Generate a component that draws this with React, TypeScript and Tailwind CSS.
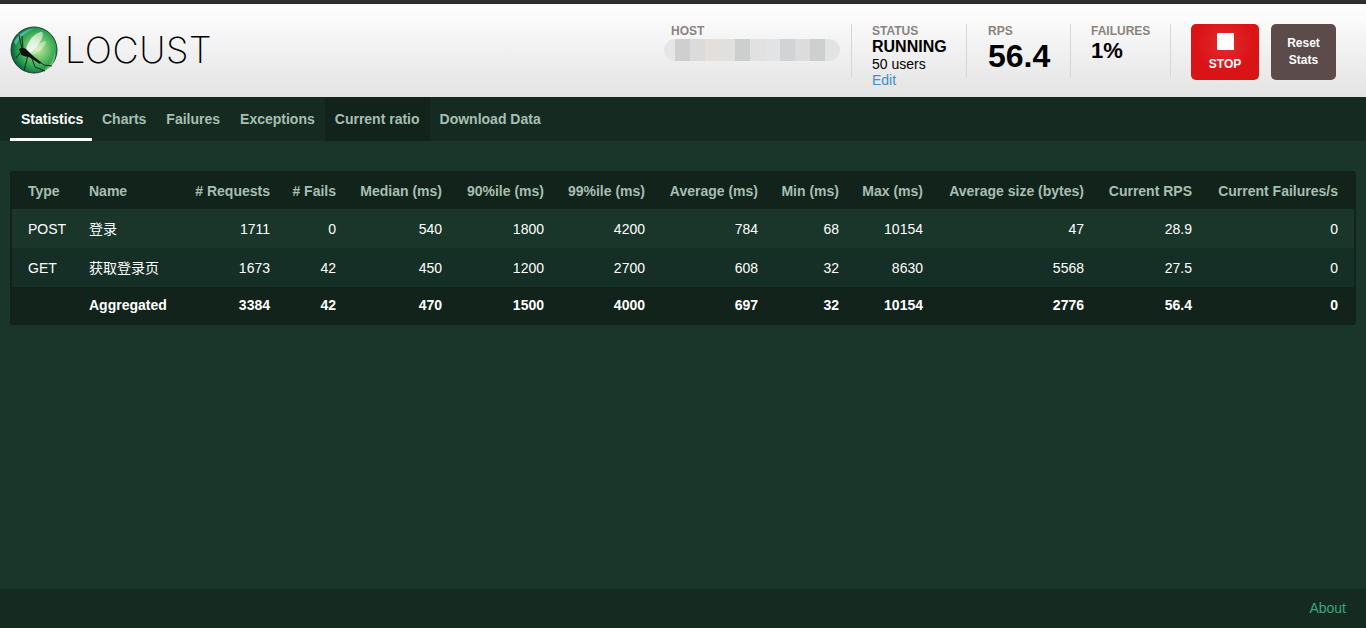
import React from "react";

const headers = ["Type", "Name", "# Requests", "# Fails", "Median (ms)", "90%ile (ms)", "99%ile (ms)", "Average (ms)", "Min (ms)", "Max (ms)", "Average size (bytes)", "Current RPS", "Current Failures/s"];
const widths = [61, 114, 103, 66, 106, 102, 101, 113, 81, 84, 161, 108, 146];
const rows = [
  ["POST", "登录", "1711", "0", "540", "1800", "4200", "784", "68", "10154", "47", "28.9", "0"],
  ["GET", "获取登录页", "1673", "42", "450", "1200", "2700", "608", "32", "8630", "5568", "27.5", "0"],
];
const agg = ["", "Aggregated", "3384", "42", "470", "1500", "4000", "697", "32", "10154", "2776", "56.4", "0"];
const tabs = ["Statistics", "Charts", "Failures", "Exceptions", "Current ratio", "Download Data"];
const blur: [number, string][] = [
  [11, "bg-[#e6e6e6]"], [15, "bg-[#cfcfcf]"], [15, "bg-[#dbdbdb]"], [15, "bg-[#e2dfdd]"], [15, "bg-[#e0e0de]"], [15, "bg-[#cdcfcf]"],
  [15, "bg-[#e3e1e0]"], [15, "bg-[#e2e3e4]"], [15, "bg-[#d2d3d4]"], [15, "bg-[#dcdcdc]"], [15, "bg-[#cfcfcf]"], [15, "bg-[#e2e3e4]"],
];

function Logo() {
  return (
    <svg width="48" height="48" viewBox="0 0 48 48" className="shrink-0">
      <defs>
        <radialGradient id="ball" cx="58%" cy="48%" r="58%">
          <stop offset="0%" stopColor="#c4e8a8" />
          <stop offset="40%" stopColor="#6cc46a" />
          <stop offset="78%" stopColor="#1f9a4c" />
          <stop offset="100%" stopColor="#0c5a38" />
        </radialGradient>
        <linearGradient id="wing" x1="1" y1="0" x2="0" y2="1">
          <stop offset="0%" stopColor="#ffffff" stopOpacity="0.5" />
          <stop offset="100%" stopColor="#ffffff" stopOpacity="0.95" />
        </linearGradient>
      </defs>
      <circle cx="24" cy="24" r="23" fill="url(#ball)" stroke="#1d3a36" strokeWidth="1" />
      <path d="M4 16C8 8 16 3 25 2.5C18 5 10 10 6 19Z" fill="#5ec8bd" opacity="0.75" />
      <path d="M34 44C40 40 44 33 45 26C46 34 42 41 35 45Z" fill="#7fdc6f" opacity="0.8" />
      <path d="M16 24C17 16 24 7 32 5.5C35 9 30 19 20 27Z" fill="url(#wing)" />
      <path d="M20 27C24 21 30 16 36 15C36 20 29 27 22 29Z" fill="#ffffff" opacity="0.4" />
      <path d="M9 23C11 21.5 14 22 16 23L21 28L31 37L30 38L19 31C16 31 13 30 11 28.5Z" fill="#0d1512" />
      <path d="M12 23L9 9M13 23L12 10M18 29L14 45M21 30L25 41L35 45M25 32L34 39L42 40M10 27L6 32" stroke="#0d1512" strokeWidth="0.9" fill="none" />
    </svg>
  );
}

function Divider() {
  return <div className="w-px h-[53px] bg-[#d6d6d6] shrink-0" />;
}

const label = "text-[12px] font-bold leading-[14px] text-[#8a8380]";

export default function App() {
  const cellPad = (i: number) => {
    if (i === 0) return "pl-[16px] pr-[4px] border-l-2 border-[#12231b] text-left";
    if (i === 1) return "pl-[18px] pr-0 text-left";
    if (i === 12) return "pl-0 pr-[16px] border-r-2 border-[#12231b] text-right";
    return "pl-0 pr-[18px] text-right";
  };
  return (
    <div className="h-[628px] flex flex-col bg-[#1a362b] font-['Liberation_Sans','Noto_Sans_CJK_SC',sans-serif] text-[14px] overflow-hidden">
      <header className="h-[97px] shrink-0 border-t-[4px] border-[#2f2f2f] bg-gradient-to-b from-white to-[#e3e3e3] flex items-start justify-between pl-[10px] pr-[30px]">
        <div className="flex items-center mt-[22px] gap-[7px]">
          <Logo />
          <span className="font-['Inter',sans-serif] font-extralight text-[36px] leading-[48px] tracking-[0.6px] text-black">LOCUST</span>
        </div>
        <div className="flex items-start pt-[20px]">
          <div className="w-[180px]">
            <div className={label}>HOST</div>
            <div className="flex h-[22px] mt-[1px] -ml-[7px] w-[176px] rounded-full overflow-hidden">
              {blur.map(([w, c], i) => (
                <div key={i} className={c} style={{ width: w }} />
              ))}
            </div>
          </div>
          <Divider />
          <div className="w-[114px] pl-[20px]">
            <div className={label}>STATUS</div>
            <div className="text-[16px] font-bold leading-[16px] text-black mt-[1px]">RUNNING</div>
            <div className="text-[14px] leading-[16px] mt-[1px] text-black">50 users</div>
            <div className="text-[14px] leading-[16px] text-[#3f8fc9]">Edit</div>
          </div>
          <Divider />
          <div className="w-[103px] pl-[21px]">
            <div className={label}>RPS</div>
            <div className="text-[32px] font-bold leading-[32px] text-black mt-[2px]">56.4</div>
          </div>
          <Divider />
          <div className="w-[99px] pl-[20px]">
            <div className={label}>FAILURES</div>
            <div className="text-[22px] font-bold leading-[24px] text-black mt-[1px]">1%</div>
          </div>
          <Divider />
          <button className="ml-[20px] w-[68px] h-[56px] rounded-[5px] bg-[radial-gradient(circle_at_50%_35%,#e22a2d,#d91316_60%)] flex flex-col items-center pt-[9px] text-white text-[12px] font-bold leading-[14px]">
            <span className="block w-[17px] h-[17px] bg-white" />
            <span className="mt-[7px]">STOP</span>
          </button>
          <button className="ml-[12px] w-[65px] h-[56px] rounded-[5px] bg-[#5b4b4a] text-white text-[12px] font-bold leading-[17px]">
            Reset<br />Stats
          </button>
        </div>
      </header>

      <nav className="h-[44px] shrink-0 bg-[#152b22] flex pl-[10px] font-bold text-[#a6bfb2]">
        {tabs.map((t, i) => (
          <div
            key={t}
            className={`h-[44px] leading-[44px] ${i === 0 ? "w-[82px] pl-[11px] text-white border-b-[3px] border-white" : "px-[10px]"} ${i === 4 ? "bg-[#12231b]" : ""}`}
          >
            {t}
          </div>
        ))}
      </nav>

      <main className="flex-1 px-[10px] pt-[30px]">
        <table className="table-fixed w-[1346px] border-separate border-spacing-0 rounded-[4px] overflow-hidden bg-[#12231b]">
          <colgroup>
            {widths.map((w, i) => (
              <col key={i} style={{ width: w }} />
            ))}
          </colgroup>
          <thead>
            <tr className="h-[38px] bg-[#12231b] text-[#a6bfb2]">
              {headers.map((h, i) => (
                <th key={h} className={`pt-[2px] font-bold whitespace-nowrap ${cellPad(i)}`}>
                  {h}
                </th>
              ))}
            </tr>
          </thead>
          <tbody className="text-white">
            {rows.map((r, ri) => (
              <tr key={ri} className={`h-[39px] ${ri === 0 ? "bg-[#1a362b]" : "bg-[#162f26]"}`}>
                {r.map((c, i) => (
                  <td key={i} className={`pt-[2px] whitespace-nowrap ${cellPad(i)}`}>
                    {c}
                  </td>
                ))}
              </tr>
            ))}
            <tr className="h-[38px] bg-[#12231b] font-bold">
              {agg.map((c, i) => (
                <td key={i} className={`pb-[2px] whitespace-nowrap ${cellPad(i)}`}>
                  {c}
                </td>
              ))}
            </tr>
          </tbody>
        </table>
      </main>

      <footer className="h-[39px] shrink-0 bg-[#152b22] flex items-center justify-end pr-[20px] text-[#3ba67c] text-[14px]">
        About
      </footer>
    </div>
  );
}
